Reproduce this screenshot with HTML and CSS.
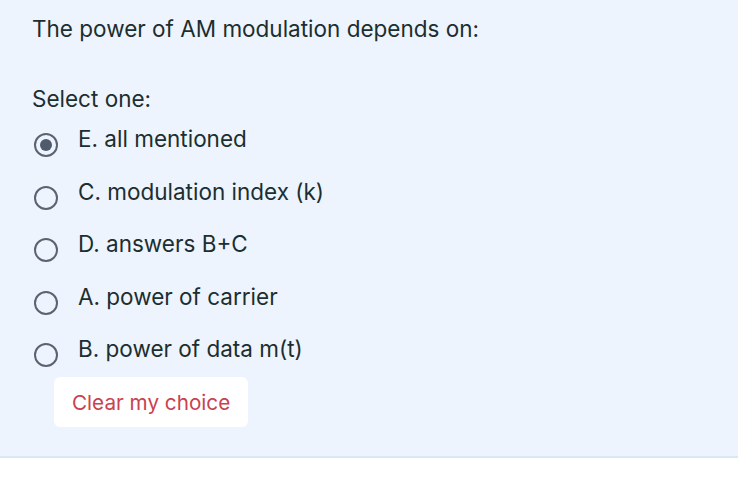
FILE: index.html
```html
<!DOCTYPE html>
<html>
<head>
<meta charset="utf-8">
<link rel="stylesheet" href="styles.css">
</head>
<body>
<div class="formulation">
  <div class="qtext">The power of AM modulation depends on:</div>
  <div class="prompt">Select one:</div>
  <div class="answers">
    <label class="opt"><span class="radio checked"></span><span class="lbl">E. all mentioned</span></label>
    <label class="opt"><span class="radio"></span><span class="lbl">C. modulation index (k)</span></label>
    <label class="opt"><span class="radio"></span><span class="lbl">D. answers B+C</span></label>
    <label class="opt"><span class="radio"></span><span class="lbl">A. power of carrier</span></label>
    <label class="opt"><span class="radio"></span><span class="lbl">B. power of data m(t)</span></label>
  </div>
  <div class="clear"><button class="clearbtn">Clear my choice</button></div>
</div>
</body>
</html>
```
FILE: styles.css
```css
html, body { margin: 0; padding: 0; background: #ffffff; }
body { font-family: Inter, "Noto Sans", sans-serif; color: #1c2e2f; }
.formulation {
  background: #edf4fd;
  border-bottom: 2px solid #d9e7f6;
  padding: 14px 32px 29px 32px;
}
.qtext { font-size: 22.5px; line-height: 30px; }
.prompt { font-size: 22.5px; line-height: 30px; margin-top: 40px; }
.answers { display: flex; flex-direction: column; gap: 22.5px; margin-top: 10px; }
.opt { display: flex; align-items: flex-start; height: 30px; font-size: 22.5px; line-height: 30px; }
.radio {
  width: 24px; height: 24px; box-sizing: border-box;
  border: 2px solid #5b6271; border-radius: 50%;
  margin: 9px 20px 0 2px; flex: none; position: relative;
}
.radio.checked::after {
  content: ""; position: absolute; left: 4px; top: 4px; width: 12px; height: 12px;
  border-radius: 50%; background: #505a6e;
}
.clear { padding-left: 22px; margin-top: 13px; }
.clearbtn {
  display: block; white-space: nowrap;
  font-family: inherit; font-size: 20.7px; color: #c9424f;
  background: #ffffff; border: none; border-radius: 6px;
  padding: 0 18px; height: 50px;
}
```
